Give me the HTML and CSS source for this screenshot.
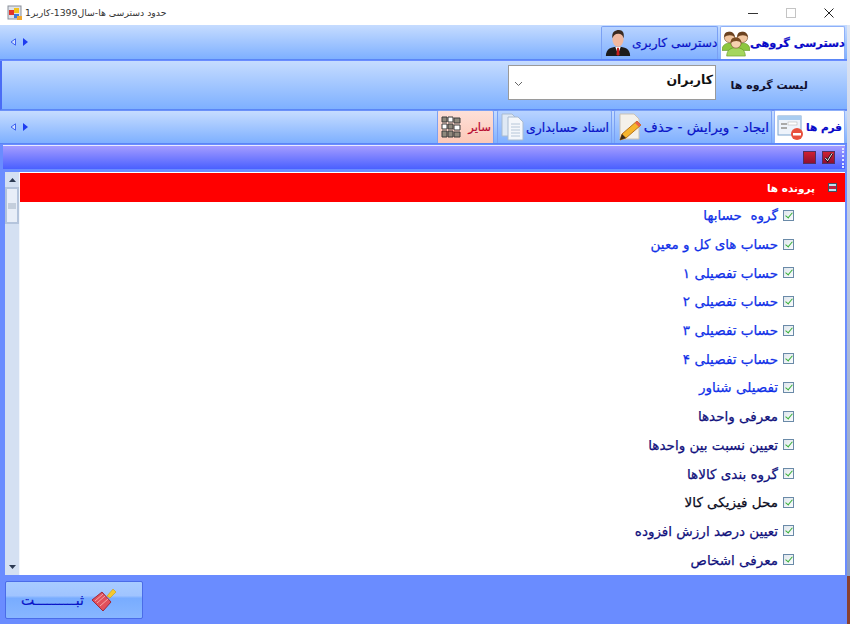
FILE: index.html
```html
<!DOCTYPE html>
<html lang="fa">
<head>
<meta charset="utf-8">
<title>حدود دسترسی</title>
<link rel="stylesheet" href="styles.css">
</head>
<body>
<div class="window">
  <header class="titlebar">
    <svg class="app-icon" width="16" height="16" viewBox="0 0 16 16"><rect x="1" y="1" width="13" height="13" fill="#dfe3ea" stroke="#8a8f99"/><rect x="2" y="5" width="5" height="5" fill="#e0332b"/><rect x="7" y="3" width="5" height="5" fill="#f2c21c"/><rect x="7" y="9" width="5" height="4" fill="#3f78d8"/><rect x="10" y="11" width="5" height="4" fill="#f0a830"/></svg>
    <span class="title" dir="rtl">حدود دسترسی ها-سال1399-کاربر1</span>
    <div class="win-controls">
      <svg width="10" height="10" viewBox="0 0 10 10"><path d="M0 5.5H10" stroke="#333" stroke-width="1"/></svg>
      <svg width="10" height="10" viewBox="0 0 10 10"><rect x=".5" y=".5" width="9" height="9" fill="none" stroke="#c4c4c4"/></svg>
      <svg width="10" height="10" viewBox="0 0 10 10"><path d="M.5 .5L9.5 9.5M9.5 .5L.5 9.5" stroke="#222" stroke-width="1"/></svg>
    </div>
  </header>

  <div class="tabstrip strip-top">
    <div class="arrows">
      <svg width="7" height="8" viewBox="0 0 7 8"><path d="M5.5 .8V7.2L1 4Z" fill="#cfe0ff" stroke="#3f62f0"/></svg>
      <svg width="7" height="8" viewBox="0 0 7 8"><path d="M1 0V8L6 4Z" fill="#1e3cf0"/></svg>
    </div>
    <div class="tabs">
      <div class="tab tab-user">
        <svg width="28" height="30" viewBox="0 0 30 30"><path d="M2 29C2 21 8 19 15 19S28 21 28 29Z" fill="#1c1c1c"/><path d="M12 19L15 27L18 19Z" fill="#fff"/><path d="M14 20H16L16.6 27L15 29L13.4 27Z" fill="#c81e1e"/><ellipse cx="15" cy="11" rx="6" ry="8" fill="#f0b8a0"/><path d="M9 10C8 3 12 1 16 1S22 4 21 10C20 6 18 5 15 5S10 7 9 10Z" fill="#3b2a20"/></svg>
        <span class="tab-label label-user">دسترسی کاربری</span>
      </div>
      <div class="tab tab-active tab-group">
        <svg width="28" height="28" viewBox="0 0 30 30"><g><path d="M0 23C0 17 4 15 9 15S17 18 17 23Z" fill="#8cc63f" stroke="#5c8f20" stroke-width=".6"/><circle cx="8" cy="9" r="5.5" fill="#f1c6a0" stroke="#6b4220" stroke-width=".6"/><path d="M2.500 9C2 4 5 3 8 3S14 5 13.500 9C12 6 5 6 2.500 9Z" fill="#6b4220"/></g><g><path d="M13 23C13 17 17 15 22 15S30 18 30 23Z" fill="#8cc63f" stroke="#5c8f20" stroke-width=".6"/><circle cx="22" cy="9" r="5.500" fill="#f1c6a0" stroke="#6b4220" stroke-width=".6"/><path d="M16.500 9C16 4 19 3 22 3S28 5 27.500 9C26 6 19 6 16.500 9Z" fill="#6b4220"/></g><g><path d="M5 29C5 22 10 20 15 20S25 22 25 29Z" fill="#a4d65e" stroke="#5c8f20" stroke-width=".6"/><circle cx="15" cy="15" r="5.500" fill="#f6d2b0" stroke="#6b4220" stroke-width=".6"/><path d="M9.500 15C9 10 12 9 15 9S21 11 20.500 15C19 12 12 12 9.500 15Z" fill="#7a4c24"/></g></svg>
        <span class="tab-label label-strong label-group">دسترسی گروهی</span>
      </div>
    </div>
  </div>

  <section class="group-panel" dir="rtl">
    <label class="group-label">لیست گروه ها</label>
    <div class="combo">
      <span class="combo-value">کاربران</span>
      <svg class="combo-caret" width="9" height="6" viewBox="0 0 9 6"><path d="M1 1L4.500 4.500L8 1" fill="none" stroke="#666" stroke-width="1"/></svg>
    </div>
  </section>

  <div class="tabstrip strip-forms">
    <div class="arrows">
      <svg width="7" height="8" viewBox="0 0 7 8"><path d="M5.500 .8V7.200L1 4Z" fill="#cfe0ff" stroke="#3f62f0"/></svg>
      <svg width="7" height="8" viewBox="0 0 7 8"><path d="M1 0V8L6 4Z" fill="#1e3cf0"/></svg>
    </div>
    <div class="tabs tabs-forms">
      <div class="tab tab-other">
        <svg width="22" height="24" viewBox="0 0 20 24"><g fill="#8f887c" stroke="#3a3a3a" stroke-width="1"><path d="M1 2H6V7H1Z"/><path d="M7 2H12V7H7Z" fill="#fff"/><path d="M13 3H19V8H13Z"/><path d="M1 9H6V14H1Z" fill="#fff"/><path d="M7 9H12V14H7Z"/><path d="M13 10H19V15H13Z" fill="#fff"/><path d="M1 16H6V22H1Z"/><path d="M7 16H12V22H7Z"/><path d="M13 17H19V22H13Z"/></g></svg>
        <span class="tab-label label-other">سایر</span>
      </div>
      <div class="tab tab-docs">
        <svg width="26" height="28" viewBox="0 0 26 28"><path d="M2 1H12L16 5V23H2Z" fill="#dfe9f5" stroke="#a9bbd0"/><path d="M8 4H18L23 9V27H8Z" fill="#f4f7fb" stroke="#a9bbd0"/><path d="M11 11H20M11 14H20M11 17H20M11 20H20M11 23H20" stroke="#b6c6d8"/></svg>
        <span class="tab-label">اسناد حسابداری</span>
      </div>
      <div class="tab tab-edit">
        <svg width="26" height="28" viewBox="0 0 26 28"><path d="M3 1H17L22 6V26H3Z" fill="#f4f1ea" stroke="#c9c3b6"/><path d="M20 8L24 12L9 25L3 27L5 21Z" fill="#f6b52c" stroke="#b8741a"/><path d="M20 8L24 12L22 14L18 10Z" fill="#e8604c"/><path d="M5 21L9 25L3 27Z" fill="#3a2a1a"/></svg>
        <span class="tab-label label-edit">ایجاد - ویرایش - حذف</span>
      </div>
      <div class="tab tab-active tab-forms">
        <svg width="26" height="26" viewBox="0 0 26 26"><rect x="1" y="2" width="23" height="19" fill="#eef3fb" stroke="#7fa6cf"/><rect x="1" y="2" width="23" height="4" fill="#a9cdf0"/><rect x="4" y="9" width="6" height="2" fill="#aaa"/><rect x="11" y="8" width="9" height="3" fill="#fff" stroke="#aaa" stroke-width=".5"/><rect x="4" y="13" width="6" height="2" fill="#aaa"/><circle cx="20" cy="20" r="6" fill="#e8503c"/><rect x="16" y="19" width="8" height="2.500" fill="#fff"/></svg>
        <span class="tab-label label-strong label-forms">فرم ها</span>
      </div>
    </div>
  </div>

  <div class="toolbar">
    <span class="grip"></span>
    <span class="tool-btn tool-check"><svg width="11" height="11" viewBox="0 0 12 12"><path d="M2.500 6.500L5 9.500L10 1.500" fill="none" stroke="#1a1020" stroke-width="2.600"/><path d="M2.500 6.500L5 9.500L10 1.500" fill="none" stroke="#fff" stroke-width="1"/></svg></span>
    <span class="tool-btn"></span>
  </div>

  <div class="tree">
    <div class="scrollbar">
      <svg class="scroll-arrow" width="7" height="4" viewBox="0 0 7 4"><path d="M0 4L3.500 0L7 4Z" fill="#2c3a52"/></svg>
      <div class="thumb"><span class="thumb-grip"></span></div>
      <svg class="scroll-arrow arrow-down" width="7" height="4" viewBox="0 0 7 4"><path d="M0 0L3.500 4L7 0Z" fill="#2c3a52"/></svg>
    </div>
    <div class="tree-body" dir="rtl">
      <div class="tree-head">
        <span class="expander"></span>
        <span class="head-label">پرونده ها</span>
      </div>
      <ul class="items">
        <li class="item c-blue"><span class="check"></span><span>گروه  حسابها</span></li>
        <li class="item c-blue"><span class="check"></span><span>حساب های کل و معین</span></li>
        <li class="item c-blue"><span class="check"></span><span>حساب تفصیلی ۱</span></li>
        <li class="item c-blue"><span class="check"></span><span>حساب تفصیلی ۲</span></li>
        <li class="item c-blue"><span class="check"></span><span>حساب تفصیلی ۳</span></li>
        <li class="item c-blue"><span class="check"></span><span>حساب تفصیلی ۴</span></li>
        <li class="item c-blue"><span class="check"></span><span>تفصیلی شناور</span></li>
        <li class="item c-navy"><span class="check"></span><span>معرفی واحدها</span></li>
        <li class="item c-navy"><span class="check"></span><span>تعیین نسبت بین واحدها</span></li>
        <li class="item c-navy"><span class="check"></span><span>گروه بندی کالاها</span></li>
        <li class="item c-black"><span class="check"></span><span>محل فیزیکی کالا</span></li>
        <li class="item c-navy"><span class="check"></span><span>تعیین درصد ارزش افزوده</span></li>
        <li class="item c-navy"><span class="check"></span><span>معرفی اشخاص</span></li>
      </ul>
    </div>
  </div>

  <footer class="footer">
    <button class="save-btn" type="button">
      <span class="save-label">ثبــــــــــت</span>
      <svg width="26" height="26" viewBox="0 0 26 26"><path d="M16 9L22 2L25 5L19 11Z" fill="#f6c92c" stroke="#c89a14" stroke-width=".6"/><path d="M1 13L11 5L20 15L12 24Z" fill="#e0505c" stroke="#a0283a"/><path d="M4 14L12 7M6 16L14 9M9 19L17 12" stroke="#f6a8a8" stroke-width="1"/></svg>
    </button>
  </footer>
</div>
</body>
</html>
```

FILE: styles.css
```css
* { box-sizing: border-box; }
html, body { margin: 0; padding: 0; }
body { width: 850px; height: 624px; overflow: hidden; background: #fff; font-family: "DejaVu Sans", sans-serif; }
.window { position: relative; width: 850px; height: 624px; display: flex; flex-direction: column; background: #6a8cff; }
.window::after { content: ""; position: absolute; right: 0; top: 25px; bottom: 0; width: 3px; background: linear-gradient(#dfe6f4 0, #8c9cc0 92%, #8a4030 92%, #8a4030 100%); }

.titlebar { height: 25px; flex: none; background: #fff; display: flex; align-items: center; padding-left: 7px; }
.app-icon { flex: none; }
.title { margin-left: 2px; font: 9.300px "DejaVu Sans", sans-serif; color: #333; white-space: nowrap; }
.win-controls { margin-left: auto; display: flex; gap: 28px; padding-right: 16px; }

.tabstrip { flex: none; display: flex; align-items: flex-end; justify-content: space-between; background: linear-gradient(#c6dcff, #7eb0ff); border-bottom: 1px solid #5a86f6; padding-right: 5px; }
.strip-top { height: 35px; }
.strip-forms { height: 34px; border-top: 1px solid #6a90f8; }
.arrows { align-self: center; display: flex; gap: 5px; padding-left: 10px; }
.tabs { display: flex; gap: 2px; height: 33px; }
.tab { flex: none; display: flex; align-items: center; justify-content: space-between; padding: 0 2px; height: 100%; background: linear-gradient(#b8d3ff, #80b0ff); border: 1px solid #7aa0f4; border-bottom: 0; border-radius: 2px 2px 0 0; white-space: nowrap; }
.tab svg { flex: none; }
.tab-active { background: #fff; border-color: #8fb0f8; }
.tab-label { font: 12.500px "DejaVu Sans", sans-serif; color: #0a14c8; direction: rtl; -webkit-text-stroke: .2px currentColor; }
.label-strong { font-weight: 700; font-size: 12px; color: #0808c8; }
.label-user { font-size: 12.200px; }
.label-edit { font-size: 13.500px; }
.label-group { font-size: 11.300px; }
.label-forms { font-size: 10.500px; }
.label-other { color: #b80a30; font-size: 11.500px; }
.tab-user { width: 117px; }
.tab-group { width: 125px; padding: 0 1px; }
.tab-other { width: 57px; margin-right: 1px; background: linear-gradient(#fde0d8, #fcc8b8); }
.tab-docs { width: 115px; }
.tab-edit { width: 158px; }
.tab-forms { width: 71px; }

.group-panel { flex: none; height: 49px; margin-top: 1px; display: flex; align-items: center; background: linear-gradient(#c6dcff, #7eb0ff); border-left: 2px solid #4a6cf5; border-bottom: 1px solid #5a86f6; padding: 0 42px 5px 0; }
.group-label { font: 700 11px "DejaVu Sans", sans-serif; color: #101030; margin-top: 6px; width: 92px; white-space: nowrap; }
.combo { flex: none; width: 208px; height: 35px; background: #fff; border: 1px solid #9a9a9a; display: flex; align-items: flex-start; justify-content: space-between; padding: 6px 2px 0 5px; }
.combo-value { font: 700 12.500px "DejaVu Sans", sans-serif; color: #111; }
.combo-caret { margin-top: 9px; }

.toolbar { flex: none; height: 24px; margin: 1px 5px 0 3px; display: flex; flex-direction: row-reverse; align-items: center; gap: 6px; padding-right: 1px; background: linear-gradient(#a49cff, #4a60ff); border-top: 1px solid #e8ecff; }
.tool-btn { width: 13px; height: 13px; background: linear-gradient(#d02030, #901030); border: 1px solid #503060; display: flex; align-items: center; justify-content: center; }
.tool-btn svg { flex: none; }
.grip { width: 3px; height: 20px; border-right: 2px dotted #dfe6ff; }

.tree { flex: none; height: 403px; margin: 3px 5px 0 5px; display: flex; background: #fff; }
.scrollbar { width: 15px; flex: none; background: #d4e0f2; display: flex; flex-direction: column; align-items: center; padding-top: 3px; border-right: 1px solid #f2f6fc; }
.scroll-arrow { flex: none; margin: 3px 0; }
.thumb { width: 14px; height: 37px; margin-top: 2px; background: #e8eef8; border: 2px solid #b4c4dc; display: flex; align-items: center; justify-content: center; }
.thumb-grip { width: 8px; height: 6px; background: #c4cedc; }
.arrow-down { margin-top: auto; margin-bottom: 6px; }
.tree-body { flex: 1; min-width: 0; }
.tree-head { height: 29px; margin-top: 1px; background: #f00; display: flex; align-items: center; padding-right: 8px; gap: 13px; }
.expander { width: 9px; height: 9px; background: #bfe0f0; border: 1px solid #405060; position: relative; flex: none; }
.expander::after { content: ""; position: absolute; left: 0; right: 0; top: 2px; height: 3px; background: #c02040; }
.head-label { font: 700 10.500px "DejaVu Sans", sans-serif; color: #fff; }
.items { list-style: none; margin: -1px 0 0; padding: 0 51px 0 0; }
.item { height: 28.700px; display: flex; align-items: center; gap: 5px; font: 13.500px "DejaVu Sans", sans-serif; white-space: pre; -webkit-text-stroke: .25px currentColor; }
.check { width: 11px; height: 11px; flex: none; border: 1px solid #6a8aa8; background: linear-gradient(135deg, #dfe6ec, #fafcfd); position: relative; }
.check::after { content: ""; position: absolute; left: 3px; top: 0; width: 3px; height: 6px; border: solid #38b038; border-width: 0 1.500px 1.500px 0; transform: rotate(40deg); }
.c-blue { color: #1030e8; }
.c-navy { color: #10107c; }
.c-black { color: #0a0a20; }

.footer { flex: 1; min-height: 0; padding: 6px 0 0 5px; }
.save-btn { width: 138px; height: 38px; padding: 0 25px 0 15px; display: flex; flex-direction: row; align-items: center; justify-content: space-between; background: linear-gradient(#a8ccff 0, #a0c4ff 38%, #78acff 45%, #88b6ff 100%); border: 1px solid #4a6ce8; border-radius: 2px; }
.save-btn svg { flex: none; }
.save-label { font: 14px "DejaVu Sans", sans-serif; color: #0a14c8; direction: rtl; -webkit-text-stroke: .2px currentColor; }
```
